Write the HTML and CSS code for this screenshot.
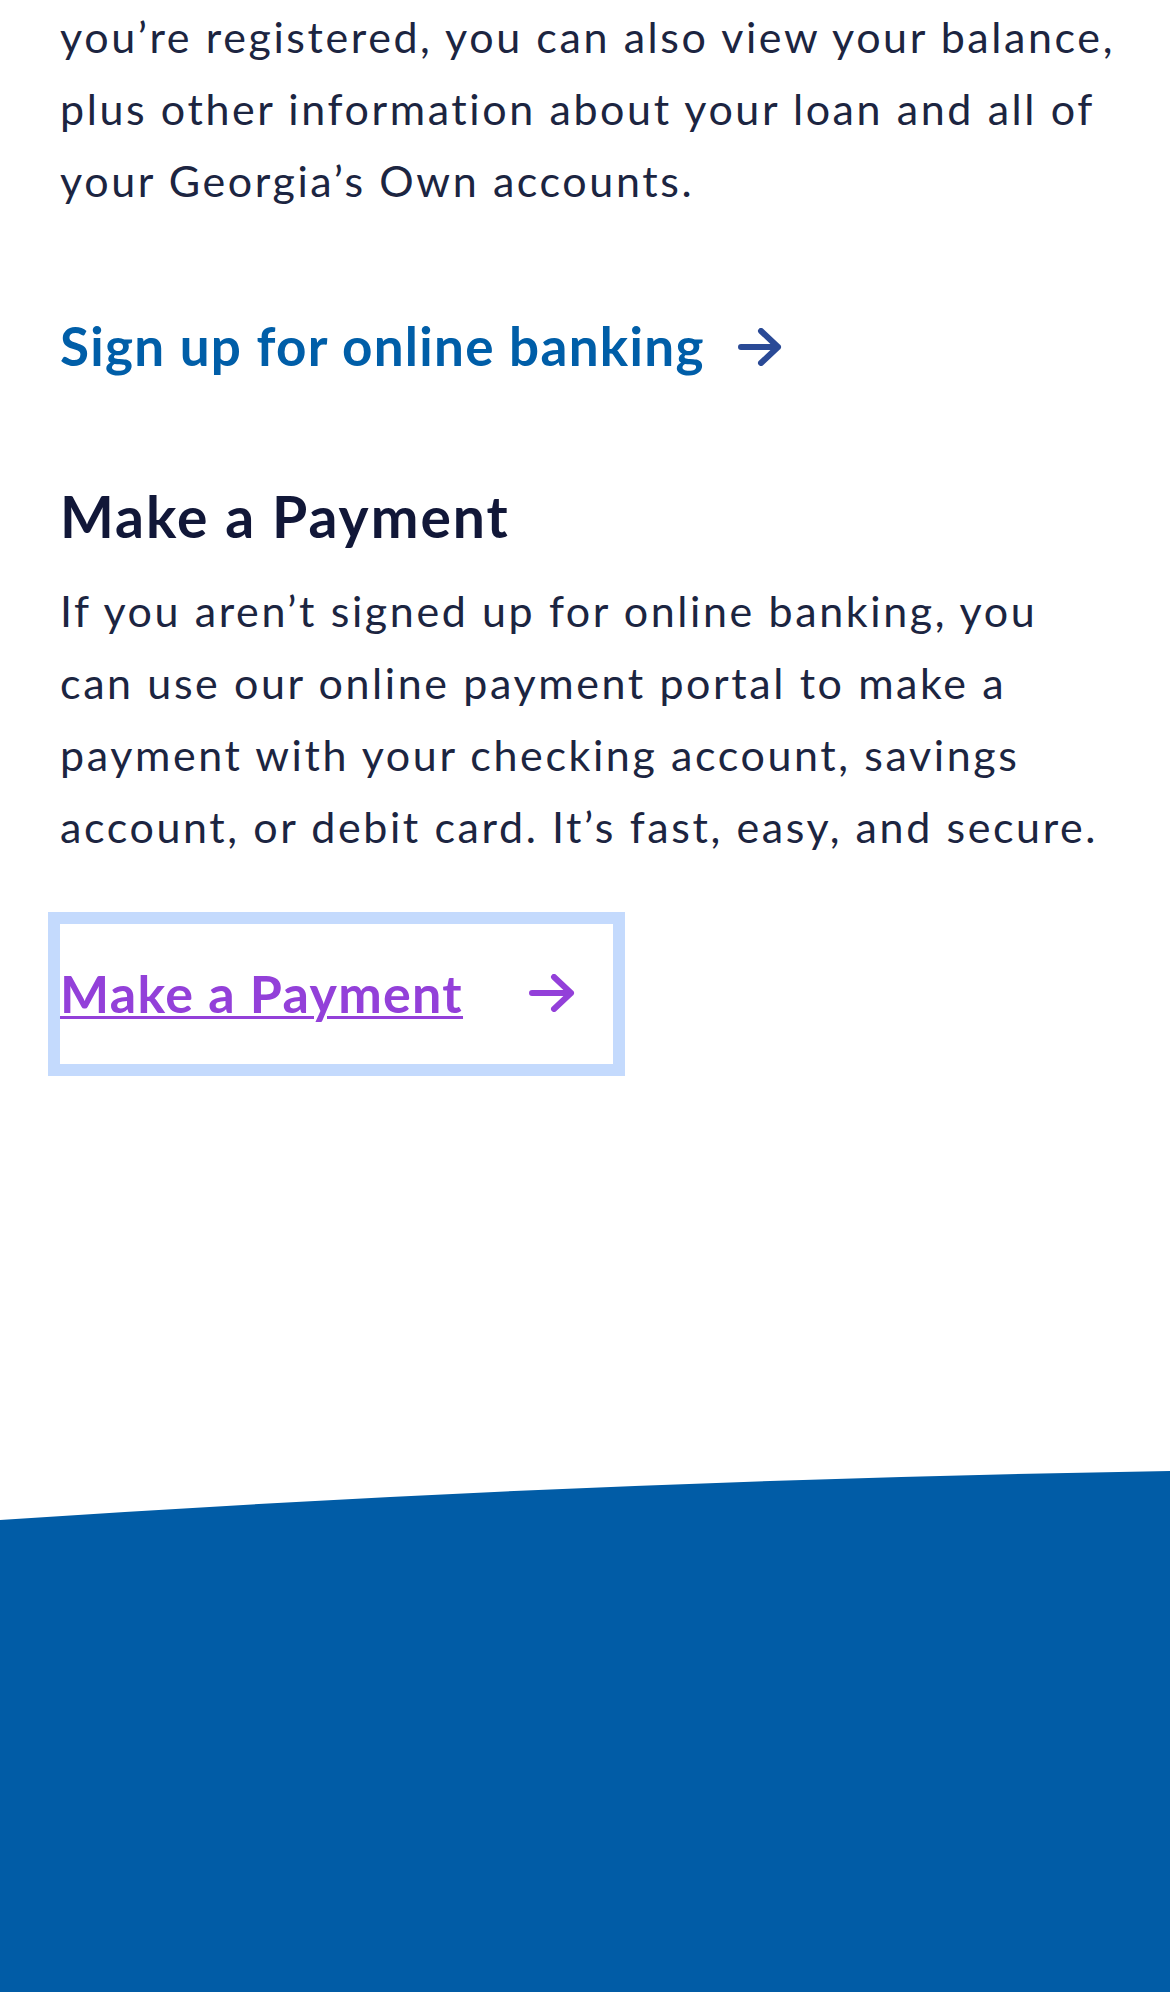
FILE: index.html
```html
<!DOCTYPE html>
<html lang="en">
<head>
<meta charset="utf-8">
<title>Make a Payment</title>
<link rel="stylesheet" href="styles.css">
</head>
<body>
<main class="content">
  <p class="body-text intro">you’re registered, you can also view your balance, plus other information about your loan and all of your Georgia’s Own accounts.</p>
  <a class="arrow-link" href="#">
    <span>Sign up for online banking</span>
    <svg class="arrow" viewBox="0 0 44 38" width="44" height="38" aria-hidden="true"><path d="M3 19H40M23 3L40 19L23 35"/></svg>
  </a>
  <h2 class="heading">Make a Payment</h2>
  <p class="body-text payment-text">If you aren’t signed up for online banking, you can use our online payment portal to make a payment with your checking account, savings account, or debit card. It’s fast, easy, and secure.</p>
  <a class="pay-button" href="#">
    <span class="pay-label">Make a Payment</span>
    <svg class="arrow" viewBox="0 0 46 38" width="46" height="38" aria-hidden="true"><path d="M3 19H42M25 3L42 19L25 35"/></svg>
  </a>
</main>
<footer class="footer">
  <svg class="wave" viewBox="0 0 1170 50" preserveAspectRatio="none" aria-hidden="true"><path d="M0 49Q585 9.5 1170 0V50H0Z"/></svg>
  <div class="footer-body"></div>
</footer>
</body>
</html>
```
FILE: styles.css
```css
html, body {
  margin: 0;
  padding: 0;
  background: #ffffff;
}

body {
  font-family: Lato, "Liberation Sans", sans-serif;
  width: 1170px;
  height: 1992px;
  overflow: hidden;
  display: flex;
  flex-direction: column;
}

.content {
  padding: 1px 50px 0 60px;
  display: flex;
  flex-direction: column;
  align-items: flex-start;
}

.body-text {
  margin: 0;
  font-size: 43px;
  line-height: 72px;
  letter-spacing: 2.6px;
  color: #1c2541;
  width: 1060px;
}

.arrow-link {
  margin-top: 97px;
  display: inline-flex;
  align-items: center;
  gap: 33px;
  font-size: 53px;
  line-height: 64px;
  font-weight: 700;
  letter-spacing: 1.3px;
  color: #005ea8;
  text-decoration: none;
}

.arrow-link .arrow {
  stroke: #2a4a96;
  margin-top: 2px;
}

.arrow {
  fill: none;
  stroke-width: 6;
  stroke-linecap: round;
  stroke-linejoin: round;
}

.heading {
  margin: 104px 0 0 0;
  font-size: 57px;
  line-height: 68px;
  font-weight: 700;
  letter-spacing: 2px;
  color: #111738;
}

.payment-text {
  margin-top: 25px;
}

.pay-button {
  margin-top: 61px;
  box-sizing: border-box;
  width: 553px;
  height: 140px;
  padding: 0 38px 2px 0;
  display: flex;
  align-items: center;
  font-size: 52px;
  line-height: 64px;
  font-weight: 700;
  letter-spacing: 1.3px;
  color: #9340d9;
  outline: 12px solid #c4dafd;
  text-decoration: none;
}

.pay-label {
  text-decoration: underline;
  text-decoration-thickness: 3px;
  text-underline-offset: 3px;
}

.pay-button .arrow {
  stroke: #9340d9;
  margin-left: auto;
}

.footer {
  margin-top: auto;
  display: flex;
  flex-direction: column;
}

.wave {
  display: block;
  width: 1170px;
  height: 50px;
  fill: #015ca6;
}

.footer-body {
  height: 472px;
  margin-top: -1px;
  background: #015ca6;
}
```
